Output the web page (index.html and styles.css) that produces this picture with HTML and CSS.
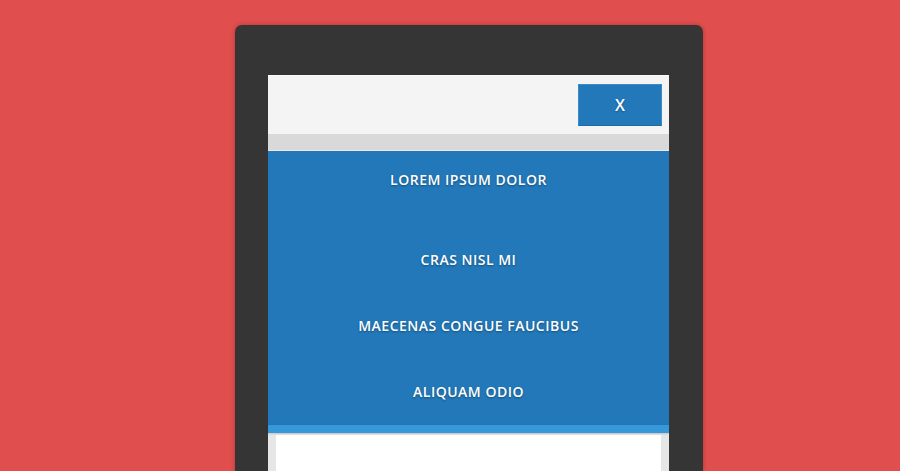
FILE: index.html
```html
<!DOCTYPE html>
<html>
<head>
<meta charset="utf-8">
<link rel="stylesheet" href="styles.css">
</head>
<body>
<div class="stage">
  <div class="phone">
    <div class="screen">
      <header class="topbar">
        <button class="close">X</button>
      </header>
      <div class="band"></div>
      <nav class="menu">
        <a class="item first">LOREM IPSUM DOLOR</a>
        <a class="item">CRAS NISL MI</a>
        <a class="item">MAECENAS CONGUE FAUCIBUS</a>
        <a class="item">ALIQUAM ODIO</a>
      </nav>
      <div class="strip"></div>
      <div class="content">
        <div class="page"></div>
      </div>
    </div>
  </div>
</div>
</body>
</html>
```

FILE: styles.css
```css
html, body {
  margin: 0;
  padding: 0;
  height: 100%;
  overflow: hidden;
}
body {
  background: #e14e4e;
  font-family: "Open Sans", "Liberation Sans", sans-serif;
}
.stage {
  display: flex;
  justify-content: flex-start;
  padding: 25px 0 0 235px;
  height: 471px;
  box-sizing: border-box;
}
.phone {
  width: 468px;
  box-sizing: border-box;
  height: 446px;
  overflow: hidden;
  background: #353535;
  border-radius: 7px 7px 0 0;
  padding: 50px 34px 0 33px;
  box-shadow: 0 0 4px rgba(80, 0, 0, 0.35);
}
.screen {
  display: flex;
  flex-direction: column;
  background: #e6e6e6;
  height: 100%;
}
.topbar {
  height: 59px;
  box-sizing: border-box;
  background: #f4f4f4;
  border-top: 1px solid #fafafa;
  display: flex;
  justify-content: flex-end;
  align-items: flex-start;
  padding: 8px 7px 0 0;
}
.close {
  width: 84px;
  height: 42px;
  background: #2278b8;
  border: 1px solid #3a8cc9;
  border-bottom-color: #1d6aa5;
  color: #fff;
  font-family: "Open Sans", "Liberation Sans", sans-serif;
  font-weight: 600;
  font-size: 16px;
  line-height: 1;
  padding: 0 0 1px 0;
  text-shadow: 0 1px 2px rgba(0, 0, 0, 0.3);
  cursor: pointer;
}
.band {
  height: 16px;
  background: #d9d9d9;
  border-bottom: 1px solid #eaeaea;
}
.menu {
  background: #2278b8;
  display: flex;
  flex-direction: column;
  height: 274px;
  flex-shrink: 0;
}
.item {
  height: 66px;
  box-sizing: border-box;
  padding-bottom: 2px;
  display: flex;
  align-items: center;
  justify-content: center;
  color: #fff;
  font-size: 14px;
  font-weight: 600;
  letter-spacing: 0.5px;
  text-shadow: 0 1px 2px rgba(0, 0, 0, 0.35);
}
.item.first {
  height: 58px;
  margin-bottom: 18px;
}
.strip {
  height: 8px;
  flex-shrink: 0;
  background: #3498db;
  box-shadow: 0 1px 2px rgba(0, 0, 0, 0.15);
  position: relative;
}
.content {
  padding: 2px 8px 0 8px;
  flex: 1;
  display: flex;
}
.page {
  flex: 1;
  background: #fff;
}
```
